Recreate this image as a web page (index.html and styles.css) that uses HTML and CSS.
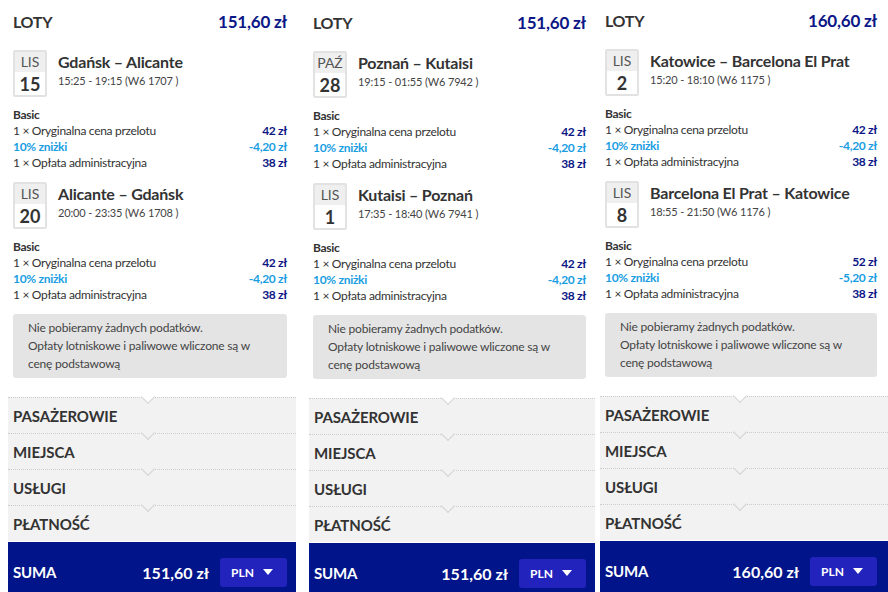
FILE: index.html
```html
<!DOCTYPE html>
<html lang="pl">
<head>
<meta charset="utf-8">
<link rel="stylesheet" href="styles.css">
</head>
<body>
<div class="row">
  <section class="panel p1">
    <div class="head"><span class="h-title">LOTY</span><span class="h-price">151,60 zł</span></div>
    <div class="flight">
      <div class="date"><div class="mon">LIS</div><div class="day">15</div></div>
      <div class="route"><div class="r-title">Gdańsk – Alicante</div><div class="r-time">15:25 - 19:15 (W6 1707 )</div></div>
    </div>
    <div class="fare">
      <div class="f-name">Basic</div>
      <div class="line"><span>1 × Oryginalna cena przelotu</span><span class="amt">42 zł</span></div>
      <div class="line disc"><span>10% zniżki</span><span>-4,20 zł</span></div>
      <div class="line"><span>1 × Opłata administracyjna</span><span class="amt">38 zł</span></div>
    </div>
    <div class="flight">
      <div class="date"><div class="mon">LIS</div><div class="day">20</div></div>
      <div class="route"><div class="r-title">Alicante – Gdańsk</div><div class="r-time">20:00 - 23:35 (W6 1708 )</div></div>
    </div>
    <div class="fare">
      <div class="f-name">Basic</div>
      <div class="line"><span>1 × Oryginalna cena przelotu</span><span class="amt">42 zł</span></div>
      <div class="line disc"><span>10% zniżki</span><span>-4,20 zł</span></div>
      <div class="line"><span>1 × Opłata administracyjna</span><span class="amt">38 zł</span></div>
    </div>
    <div class="note">Nie pobieramy żadnych podatków.<br>Opłaty lotniskowe i paliwowe wliczone są w cenę podstawową</div>
    <div class="acc">
      <div class="item first">PASAŻEROWIE</div>
      <div class="item">MIEJSCA</div>
      <div class="item">USŁUGI</div>
      <div class="item">PŁATNOŚĆ</div>
    </div>
    <div class="foot"><span class="suma">SUMA</span><span class="total">151,60 zł</span><span class="cur">PLN<i class="tri"></i></span></div>
  </section>

  <section class="panel p2">
    <div class="head"><span class="h-title">LOTY</span><span class="h-price">151,60 zł</span></div>
    <div class="flight">
      <div class="date"><div class="mon">PAŹ</div><div class="day">28</div></div>
      <div class="route"><div class="r-title">Poznań – Kutaisi</div><div class="r-time">19:15 - 01:55 (W6 7942 )</div></div>
    </div>
    <div class="fare">
      <div class="f-name">Basic</div>
      <div class="line"><span>1 × Oryginalna cena przelotu</span><span class="amt">42 zł</span></div>
      <div class="line disc"><span>10% zniżki</span><span>-4,20 zł</span></div>
      <div class="line"><span>1 × Opłata administracyjna</span><span class="amt">38 zł</span></div>
    </div>
    <div class="flight">
      <div class="date"><div class="mon">LIS</div><div class="day">1</div></div>
      <div class="route"><div class="r-title">Kutaisi – Poznań</div><div class="r-time">17:35 - 18:40 (W6 7941 )</div></div>
    </div>
    <div class="fare">
      <div class="f-name">Basic</div>
      <div class="line"><span>1 × Oryginalna cena przelotu</span><span class="amt">42 zł</span></div>
      <div class="line disc"><span>10% zniżki</span><span>-4,20 zł</span></div>
      <div class="line"><span>1 × Opłata administracyjna</span><span class="amt">38 zł</span></div>
    </div>
    <div class="note">Nie pobieramy żadnych podatków.<br>Opłaty lotniskowe i paliwowe wliczone są w cenę podstawową</div>
    <div class="acc">
      <div class="item first">PASAŻEROWIE</div>
      <div class="item">MIEJSCA</div>
      <div class="item">USŁUGI</div>
      <div class="item">PŁATNOŚĆ</div>
    </div>
    <div class="foot"><span class="suma">SUMA</span><span class="total">151,60 zł</span><span class="cur">PLN<i class="tri"></i></span></div>
  </section>

  <section class="panel p3">
    <div class="head"><span class="h-title">LOTY</span><span class="h-price">160,60 zł</span></div>
    <div class="flight">
      <div class="date"><div class="mon">LIS</div><div class="day">2</div></div>
      <div class="route"><div class="r-title">Katowice – Barcelona El Prat</div><div class="r-time">15:20 - 18:10 (W6 1175 )</div></div>
    </div>
    <div class="fare">
      <div class="f-name">Basic</div>
      <div class="line"><span>1 × Oryginalna cena przelotu</span><span class="amt">42 zł</span></div>
      <div class="line disc"><span>10% zniżki</span><span>-4,20 zł</span></div>
      <div class="line"><span>1 × Opłata administracyjna</span><span class="amt">38 zł</span></div>
    </div>
    <div class="flight">
      <div class="date"><div class="mon">LIS</div><div class="day">8</div></div>
      <div class="route"><div class="r-title">Barcelona El Prat – Katowice</div><div class="r-time">18:55 - 21:50 (W6 1176 )</div></div>
    </div>
    <div class="fare">
      <div class="f-name">Basic</div>
      <div class="line"><span>1 × Oryginalna cena przelotu</span><span class="amt">52 zł</span></div>
      <div class="line disc"><span>10% zniżki</span><span>-5,20 zł</span></div>
      <div class="line"><span>1 × Opłata administracyjna</span><span class="amt">38 zł</span></div>
    </div>
    <div class="note">Nie pobieramy żadnych podatków.<br>Opłaty lotniskowe i paliwowe wliczone są w cenę podstawową</div>
    <div class="acc">
      <div class="item first">PASAŻEROWIE</div>
      <div class="item">MIEJSCA</div>
      <div class="item">USŁUGI</div>
      <div class="item">PŁATNOŚĆ</div>
    </div>
    <div class="foot"><span class="suma">SUMA</span><span class="total">160,60 zł</span><span class="cur">PLN<i class="tri"></i></span></div>
  </section>
</div>
</body>
</html>
```

FILE: styles.css
```css
* { box-sizing: border-box; }
html, body { margin: 0; padding: 0; background: #fff; overflow: hidden; }
body {
  width: 888px; height: 592px;
  font-family: Lato, "Open Sans", sans-serif;
  color: #333;
}
.row { display: flex; align-items: flex-start; }
.panel { display: flex; flex-direction: column; flex: none; }
.p1 { width: 288px; margin-left: 8px; }
.p2 { width: 286px; margin-left: 13px; margin-top: 1px; }
.p3 { width: 288px; margin-left: 5px; margin-top: -1px; }

.head, .flight, .fare, .note { margin-left: 5px; margin-right: 9px; }
.p2 .head, .p2 .flight, .p2 .fare, .p2 .note { margin-left: 4px; }
.p3 .head, .p3 .flight, .p3 .fare, .p3 .note { margin-right: 11px; }

.head {
  display: flex; justify-content: space-between; align-items: center;
  height: 20px; margin-top: 11px;
  font-weight: 700; font-size: 16px;
}
.h-title { color: #333; letter-spacing: -0.3px; }
.h-price { color: #0b1786; font-size: 17px; letter-spacing: -0.2px; }

.flight { display: flex; align-items: flex-start; margin-top: 19px; }
.fare + .flight { margin-top: 11px; }
.date {
  width: 34px; height: 47px; flex: none;
  border: 2px solid #e2e2e2; border-radius: 2px;
  display: flex; flex-direction: column; text-align: center;
}
.mon {
  height: 20px; line-height: 20px; background: #efefef;
  font-size: 14px; color: #555;
}
.day {
  flex: 1; display: flex; align-items: center; justify-content: center;
  font-size: 18px; font-weight: 700; color: #333;
}
.route { margin-left: 11px; padding-top: 2px; }
.r-title { font-size: 16px; font-weight: 700; color: #333; line-height: 20px; letter-spacing: -0.2px; }
.r-time { font-size: 11px; color: #444; line-height: 16px; margin-top: 1px; letter-spacing: -0.15px; }

.fare { margin-top: 10px; font-size: 12px; line-height: 16px; letter-spacing: -0.3px; }
.f-name { font-weight: 700; color: #333; }
.line { display: flex; justify-content: space-between; color: #333; }
.amt { font-weight: 700; color: #0b1786; }
.disc { color: #1a9ee2; font-weight: 700; }

.note {
  margin-top: 11px; background: #e4e4e4; border-radius: 3px;
  padding: 5px 24px 5px 15px;
  font-size: 12px; line-height: 18px; color: #444; letter-spacing: -0.2px;
}

.acc { margin-top: 19px; background: #f2f2f2; }
.item {
  position: relative; height: 36px;
  border-top: 1px dotted #cdcdcd;
  padding: 0 5px; line-height: 36px;
  font-size: 15px; font-weight: 700; color: #333; letter-spacing: -0.1px;
}
.item::before {
  content: ""; position: absolute; left: 50%; top: -6px;
  width: 9px; height: 9px; margin-left: -9px;
  background: #f2f2f2;
  border-right: 1px solid #d2d2d2; border-bottom: 1px solid #d2d2d2;
  transform: rotate(45deg);
}
.item.first::before { background: #fff; }

.foot {
  height: 60px; background: #011489; color: #fff;
  display: flex; align-items: center; padding: 0 9px 0 5px;
  margin-top: 1px;
}
.suma { font-size: 15px; font-weight: 700; flex: 1; letter-spacing: -0.2px; }
.total { font-size: 16px; font-weight: 700; margin-right: 11px; }
.cur {
  width: 67px; height: 29px; background: #2222bd; border-radius: 3px;
  display: flex; align-items: center; justify-content: space-between;
  padding: 0 14px 0 11px; font-size: 12px; font-weight: 700;
}
.tri {
  width: 0; height: 0;
  border-left: 5px solid transparent; border-right: 5px solid transparent;
  border-top: 6px solid #fff;
}
.p3 .foot { padding-right: 11px; }
```
